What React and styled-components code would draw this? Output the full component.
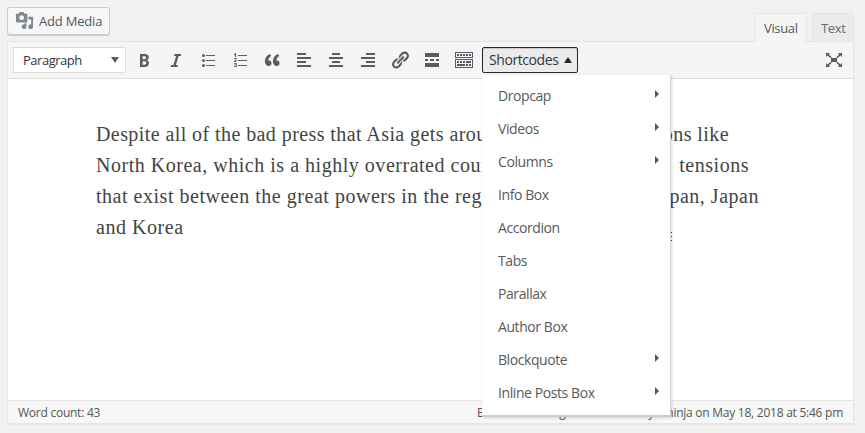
import React from "react";
import styled, { createGlobalStyle } from "styled-components";

const Global = createGlobalStyle`
  * { box-sizing: border-box; }
  body { margin: 0; background: #f1f1f1; font-family: "Open Sans", "Noto Sans", sans-serif; color: #555; overflow: hidden; }
`;
const Page = styled.div`
  width: 865px; height: 433px; padding: 0 11px 0 7px; display: flex; flex-direction: column;
`;
const Header = styled.div`
  height: 41px; display: flex; justify-content: space-between; align-items: flex-start; flex: none;
`;
const MediaButton = styled.button`
  margin: 7px 0 0; width: 103px; height: 28px; padding: 0 0 1px 7px; display: flex; align-items: center; gap: 5px;
  background: #f7f7f7; border: 1px solid #ccc; border-radius: 3px; box-shadow: 0 1px 0 #ccc;
  font: 13px "Open Sans", sans-serif; letter-spacing: -0.2px; color: #555; white-space: nowrap;
`;
const Tabs = styled.div`
  display: flex; gap: 5px; margin-top: 13px; position: relative;
`;
const Tab = styled.div`
  width: ${p => p.$width}px; height: ${p => (p.$active ? 29 : 28)}px; border: 1px solid #e5e5e5;
  border-bottom: 0; background: ${p => (p.$active ? "#f5f5f5" : "#ebebeb")};
  color: ${p => (p.$active ? "#555" : "#666b70")}; font-size: 13px; line-height: 29px; padding-left: 8px;
  letter-spacing: ${p => p.$tracking}px;
`;
const Editor = styled.div`
  height: 383px; width: 847px; border: 1px solid #e5e5e5; background: #fff; display: flex; flex-direction: column;
  box-shadow: 0 1px 1px rgba(0,0,0,.04);
`;
const Toolbar = styled.div`
  height: 37px; flex: none; background: #f5f5f5; border-bottom: 1px solid #ddd; display: flex; align-items: center; padding: 0 9px 0 5px;
`;
const FormatSelect = styled.div`
  width: 113px; height: 26px; border: 1px solid #ddd; background: #fff; color: #32373c; display: flex;
  align-items: center; justify-content: space-between; padding: 0 6px 0 9px; font-size: 13px; letter-spacing: -0.48px; margin-right: 8px;
`;
const Tools = styled.div`
  display: flex; gap: 12px; width: 340px; margin-right: 8px;
`;
const Icon = styled.svg`
  display: block; flex: none; fill: ${p => p.$color || "#555d66"};
`;
const ShortcodeAnchor = styled.div`
  position: relative; width: 96px; height: 26px;
`;
const ShortcodeButton = styled.div`
  height: 26px; border: 1px solid #23282d; border-radius: 2px; background: #ebebeb; color: #32373c;
  display: flex; align-items: center; justify-content: space-between; padding: 0 5px 1px 6px; font-size: 14px; letter-spacing: -0.42px;
  box-shadow: inset 0 1px 1px rgba(0,0,0,.15);
`;
const Menu = styled.div`
  position: absolute; z-index: 2; left: 0; top: 28px; width: 189px; height: 342px; padding: 4px 0 6px; background: #fff;
  border-right: 1px solid #d4d4d4; border-bottom: 2px solid #cdcdcd;
  box-shadow: 1px 1px 3px rgba(0,0,0,.14);
`;
const MenuItem = styled.div`
  height: 33px; padding: 0 11px 0 16px; display: flex; align-items: center; justify-content: space-between;
  font-size: 14px; letter-spacing: ${p => p.$tracking}px; color: #595959;
`;
const SubArrow = styled.svg`
  display: block; fill: #555; margin-bottom: 3px;
`;
const Spacer = styled.div`flex: 1;`;
const Content = styled.div`
  flex: 1; padding: 40px 0 0 88px; font-family: "Liberation Serif", serif; font-size: 20px; color: #444;
`;
const Line = styled.div`
  height: 31px; line-height: 31px; width: ${p => p.$width}px; display: flex; justify-content: space-between; white-space: nowrap;
  letter-spacing: ${p => p.$tracking}px;
`;
const EdgeMark = styled.svg`
  display: block; margin: -11px 0 0 574px; fill: #333;
`;
const Status = styled.div`
  height: 23px; flex: none; border-top: 1px solid #e5e5e5; background: #f7f7f7; display: flex; justify-content: space-between;
  padding: 0 10px; font-size: 12px; line-height: 23px; letter-spacing: -0.25px; color: #555;
`;
const LastEdit = styled.div`
  width: 366px; display: flex; justify-content: space-between; white-space: nowrap;
`;

const icons = [
  "M6 4v13h4.54c1.37 0 2.46-.33 3.26-1 .8-.66 1.2-1.58 1.2-2.77 0-.84-.17-1.51-.51-2.01s-.9-.85-1.67-1.03v-.09c.57-.1 1.02-.4 1.36-.9s.51-1.13.51-1.91c0-1.14-.39-1.98-1.17-2.5C12.75 4.26 11.5 4 9.78 4H6zm2.57 5.15V6.26h1.36c.73 0 1.27.11 1.61.32.34.22.51.58.51 1.07 0 .54-.16.92-.47 1.15s-.82.35-1.51.35h-1.5zm0 2.19h1.6c1.44 0 2.16.53 2.16 1.61 0 .6-.17 1.05-.51 1.34s-.86.43-1.57.43H8.57v-3.38z",
  "M14.78 6h-2.13l-2.8 9h2.12l-.62 2H4.6l.62-2h2.14l2.8-9H8.03l.62-2h6.75z",
  "M5.5 4a1.5 1.5 0 1 0 0 3 1.5 1.5 0 0 0 0-3zM8 5h9v1H8zM5.5 9a1.5 1.5 0 1 0 0 3 1.5 1.5 0 0 0 0-3zM8 10h9v1H8zM5.5 14a1.5 1.5 0 1 0 0 3 1.5 1.5 0 0 0 0-3zM8 15h9v1H8z",
  "M8 5h9v1H8zM8 10h9v1H8zM8 15h9v1H8zM5 3h1v4H5zM4 4h1v1H4zM4 8h2.5v2.2L5.2 11.2h1.5v.8H4v-.9l1.6-1.4v-.9H4zM4 13h2.7v4H4v-.8h1.8v-.8H4.6v-.8h1.2v-.8H4z",
  "M9.49 13.22c0-.74-.2-1.38-.61-1.9-.62-.78-1.83-.88-2.53-.72-.29-1.65 1.11-3.75 2.92-4.65L7.88 4c-2.73 1.3-5.42 4.28-4.96 8.05C3.21 14.43 4.59 16 6.54 16c.85 0 1.56-.25 2.12-.75s.83-1.18.83-2.03zm8.05 0c0-.74-.2-1.38-.61-1.9-.63-.78-1.83-.88-2.53-.72-.29-1.65 1.11-3.75 2.92-4.65L15.93 4c-2.73 1.3-5.41 4.28-4.95 8.05.29 2.38 1.66 3.95 3.61 3.95.85 0 1.56-.25 2.12-.75s.83-1.18.83-2.03z",
  "M12 5V3H3v2h9zm5 4V7H3v2h14zm-5 4v-2H3v2h9zm5 4v-2H3v2h14z",
  "M14 5V3H6v2h8zm3 4V7H3v2h14zm-3 4v-2H6v2h8zm3 4v-2H3v2h14z",
  "M17 5V3H8v2h9zm0 4V7H3v2h14zm0 4v-2H8v2h9zm0 4v-2H3v2h14z",
  "M17.74 2.76c1.68 1.69 1.68 4.41 0 6.1l-1.53 1.52c-1.12 1.12-2.7 1.47-4.14 1.09l2.62-2.61.76-.77.76-.76c.84-.84.84-2.2 0-3.04-.84-.85-2.2-.85-3.04 0l-.77.76-3.38 3.38c-.37-1.44-.02-3.02 1.1-4.14l1.52-1.53c1.69-1.68 4.42-1.68 6.1 0zM8.59 13.43l5.34-5.34c.42-.42.42-1.1 0-1.52-.44-.43-1.13-.39-1.53 0l-5.33 5.34c-.42.42-.42 1.1 0 1.52.44.43 1.13.39 1.52 0zm-.76 2.29l4.14-4.15c.38 1.44.03 3.02-1.09 4.14l-1.52 1.53c-1.69 1.68-4.41 1.68-6.1 0-1.68-1.68-1.68-4.42 0-6.1l1.53-1.52c1.12-1.12 2.7-1.47 4.14-1.1l-4.14 4.15c-.85.84-.85 2.2 0 3.05.84.84 2.2.84 3.04 0z",
  "M17 7V3H3v4h14zM6 11V9H3v2h3zm6 0V9H8v2h4zm5 0V9h-3v2h3zm0 6v-4H3v4h14z",
  "M19 2v6H1V2h18zm-1 5V3H2v4h16zM5 4v2H3V4h2zm3 0v2H6V4h2zm3 0v2H9V4h2zm3 0v2h-2V4h2zm3 0v2h-2V4h2zm2 5v9H1V9h18zm-1 8v-7H2v7h16zM5 11v2H3v-2h2zm3 0v2H6v-2h2zm3 0v2H9v-2h2zm6 0v2h-5v-2h5zm-6 3v2H3v-2h8zm3 0v2h-2v-2h2zm3 0v2h-2v-2h2z",
];
const mediaPath = "M13 11V4c0-.55-.45-1-1-1h-1.67L9 1H5L3.67 3H2c-.55 0-1 .45-1 1v7c0 .55.45 1 1 1h10c.55 0 1-.45 1-1zM7 4.5c1.38 0 2.5 1.12 2.5 2.5S8.38 9.5 7 9.5 4.5 8.38 4.5 7 5.62 4.5 7 4.5zM14 6h5v10.5c0 1.38-1.12 2.5-2.5 2.5S14 17.88 14 16.5s1.12-2.5 2.5-2.5c.17 0 .34.02.5.05V9h-3V6zm-4 8.05V13h2v3.5c0 1.38-1.12 2.5-2.5 2.5S7 17.88 7 16.5 8.12 14 9.5 14c.17 0 .34.02.5.05z";
const expandPath = "M7 8h6v4H7zM2 3h4L4.9 4.4 7.8 7.2l-1.1 1.1L3.5 5.5 2 7zM18 3h-4l1.1 1.4-2.9 2.8 1.1 1.1 3.2-2.8L18 7zM2 17h4l-1.1-1.4 2.9-2.8-1.1-1.1-3.2 2.8L2 13zM18 17h-4l1.1-1.4-2.9-2.8 1.1-1.1 3.2 2.8L18 13z";

const menuItems = [
  ["Dropcap", true], ["Videos", true], ["Columns", true], ["Info Box"], ["Accordion"],
  ["Tabs"], ["Parallax"], ["Author Box"], ["Blockquote", true], ["Inline Posts Box", true],
];

export default function App() {
  return (
    <>
      <Global />
      <Page>
        <Header>
          <MediaButton><Icon width="19" height="19" viewBox="0 0 20 20" $color="#82878c"><path d={mediaPath} /></Icon>Add Media</MediaButton>
          <Tabs><Tab $active $width={52} $tracking={-0.35}>Visual</Tab><Tab $width={42} $tracking={-0.35}>Text</Tab></Tabs>
        </Header>
        <Editor>
          <Toolbar>
            <FormatSelect>Paragraph<Icon width="8" height="6" viewBox="0 0 8 6"><path d="M0 0h8L4 6z" /></Icon></FormatSelect>
            <Tools>{icons.map((d, i) => <Icon key={i} width="20" height="20" viewBox="0 0 20 20"><path d={d} /></Icon>)}</Tools>
            <ShortcodeAnchor>
              <ShortcodeButton>Shortcodes<Icon width="8" height="6" viewBox="0 0 8 6" $color="#23282d"><path d="M0 6h8L4 0z" /></Icon></ShortcodeButton>
              <Menu>
                {menuItems.map(([label, sub]) => (
                  <MenuItem key={label} $tracking={-0.42}>{label}{sub && <SubArrow width="4" height="8" viewBox="0 0 4 8"><path d="M0 0l4 4-4 4z" /></SubArrow>}</MenuItem>
                ))}
              </Menu>
            </ShortcodeAnchor>
            <Spacer />
            <Icon width="20" height="20" viewBox="0 0 20 20"><path d={expandPath} /></Icon>
          </Toolbar>
          <Content>
            <Line $width={633} $tracking={0.42}><span>Despite all of the bad press that Asia gets arou</span><span>ons like</span></Line>
            <Line $width={653} $tracking={0.52}><span>North Korea, which is a highly overrated coun</span><span>tensions</span></Line>
            <Line $width={663} $tracking={0.52}><span>that exist between the great powers in the reg</span><span>pan, Japan</span></Line>
            <Line $width={663} $tracking={0.55}><span>and Korea</span></Line>
            <EdgeMark width="2" height="10" viewBox="0 0 2 10"><path d="M0 0h2v1H0zM0 4h2v1H0zM0 8h2v1H0z" /></EdgeMark>
          </Content>
          <Status><span>Word count: 43</span><LastEdit><span>Essential weblog</span><span>by a ninja on May 18, 2018 at 5:46 pm</span></LastEdit></Status>
        </Editor>
      </Page>
    </>
  );
}
